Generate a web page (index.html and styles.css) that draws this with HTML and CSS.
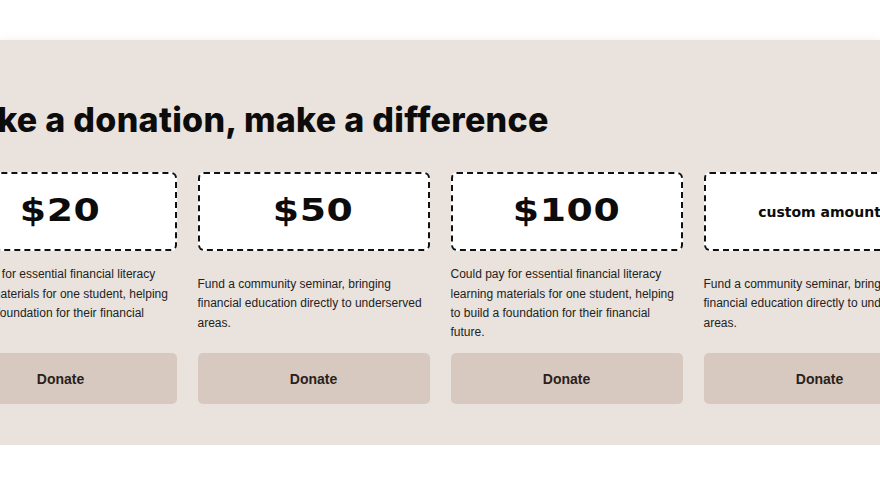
FILE: index.html
```html
<!DOCTYPE html>
<html lang="en">
<head>
<meta charset="utf-8">
<title>Donate</title>
<link rel="stylesheet" href="styles.css">
</head>
<body>
  <section class="donate">
    <div class="donate__inner">
      <h2 class="donate__title">Make a donation, make a difference</h2>
      <div class="tiers">
        <div class="tier">
          <div class="tier__amount"><span class="tier__value">$20</span></div>
          <div class="tier__desc"><p>Could pay for essential financial literacy learning materials for one student, helping to build a foundation for their financial future.</p></div>
          <button class="tier__btn">Donate</button>
        </div>
        <div class="tier">
          <div class="tier__amount"><span class="tier__value">$50</span></div>
          <div class="tier__desc"><p>Fund a community seminar, bringing financial education directly to underserved areas.</p></div>
          <button class="tier__btn">Donate</button>
        </div>
        <div class="tier">
          <div class="tier__amount"><span class="tier__value">$100</span></div>
          <div class="tier__desc"><p>Could pay for essential financial literacy learning materials for one student, helping to build a foundation for their financial future.</p></div>
          <button class="tier__btn">Donate</button>
        </div>
        <div class="tier">
          <div class="tier__amount"><span class="tier__custom">custom amount</span></div>
          <div class="tier__desc"><p>Fund a community seminar, bringing financial education directly to underserved areas.</p></div>
          <button class="tier__btn">Donate</button>
        </div>
      </div>
    </div>
  </section>
</body>
</html>
```

FILE: styles.css
```css
html, body {
  margin: 0;
  padding: 0;
  background: #ffffff;
  overflow: hidden;
}

body {
  font-family: "Liberation Sans", Arial, sans-serif;
  color: #1e1e1e;
}

.donate {
  margin-top: 40px;
  height: 405px;
  background: #e9e2dd;
  box-shadow: 0 0 8px rgba(120, 130, 125, 0.12);
  display: flex;
  justify-content: center;
}

.donate__inner {
  width: 991px;
  flex-shrink: 0;
  padding-top: 60px;
  box-sizing: border-box;
}

.donate__title {
  margin: 0 0 32px;
  font-family: Inter, "DejaVu Sans", sans-serif;
  font-weight: 800;
  font-size: 34px;
  line-height: 40px;
  letter-spacing: 0.3px;
  color: #0c0c0c;
}

.tiers {
  display: grid;
  grid-template-columns: repeat(4, 232px);
  column-gap: 21px;
}

.tier {
  display: flex;
  flex-direction: column;
}

.tier__amount {
  height: 79px;
  box-sizing: border-box;
  border: 2px dashed #111;
  border-radius: 6px;
  background: #ffffff;
  display: flex;
  align-items: center;
  justify-content: center;
  color: #0c0c0c;
}

/* wide display numerals */
.tier__value {
  display: inline-block;
  font-family: "DejaVu Sans", sans-serif;
  font-weight: 700;
  font-size: 32px;
  letter-spacing: 0.5px;
  transform: scaleX(1.18);
  margin-top: -3px;
}

.tier__custom {
  font-family: "DejaVu Sans", sans-serif;
  font-weight: 700;
  font-size: 14px;
}

.tier__desc {
  height: 102px;
  box-sizing: border-box;
  padding-top: 4px;
  display: flex;
  align-items: center;
}

.tier__desc p {
  margin: 0;
  font-size: 12px;
  line-height: 19.3px;
  color: #222;
}

.tier__btn {
  height: 51px;
  border: 0;
  border-radius: 5px;
  background: #d8c9c0;
  font-family: "Liberation Sans", Arial, sans-serif;
  font-weight: 700;
  font-size: 14px;
  color: #2a1f1a;
  cursor: pointer;
}
```
